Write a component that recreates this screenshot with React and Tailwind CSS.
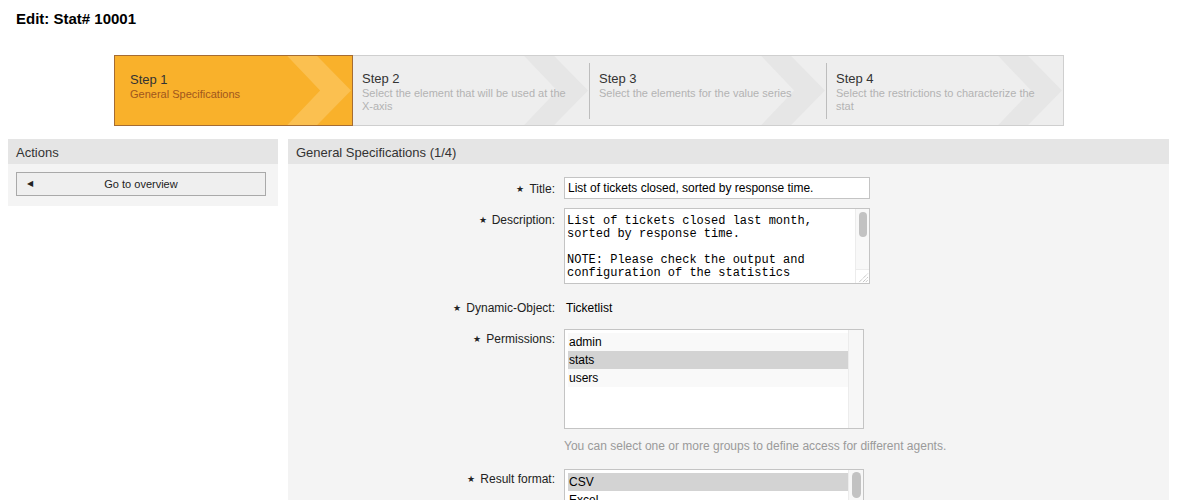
import React from 'react';

const steps = [
  { n: 'Step 1', desc: 'General Specifications' },
  { n: 'Step 2', desc: 'Select the element that will be used at the X-axis' },
  { n: 'Step 3', desc: 'Select the elements for the value series' },
  { n: 'Step 4', desc: 'Select the restrictions to characterize the stat' },
];

const Chevron = ({ fill }) => (
  <svg className="absolute inset-0 h-full w-full" viewBox="0 0 238 71" preserveAspectRatio="none">
    <polygon points="173,0 203,0 237,35.5 203,71 173,71 206,35.5" fill={fill} />
  </svg>
);

const Star = () => <span className="mr-[5px] text-[9px] align-[1px]">★</span>;

const FormLabel = ({ children, className = 'pt-px' }) => (
  <div className={`w-[276px] shrink-0 pr-[9px] text-right ${className}`}>
    <Star />
    {children}
  </div>
);

const Scrollbar = ({ thumb }) => (
  <div className="w-[15px] shrink-0 border-l border-[#ececec] bg-[#f7f7f7] pt-[2px] flex justify-center">
    {thumb && <div className="w-[9px] h-[26px] rounded-full bg-[#c2c2c2]" />}
  </div>
);

const App = () => {
  return (
    <div className="h-[500px] overflow-hidden bg-white font-['Liberation_Sans',Arial,sans-serif] text-[12px] text-[#222]">
      <h1 className="pl-4 pt-[10px] text-[15px] font-bold leading-[18px] text-black">Edit: Stat# 10001</h1>

      <div className="ml-[114px] mt-[27px] grid w-[950px] grid-cols-4 border border-[#cfcfcf] bg-[#eeeeee]">
        {steps.map((s, i) => (
          <div
            key={s.n}
            className={
              i === 0
                ? 'relative -m-px h-[71px] border border-[#a56c33] bg-[#f9b12b]'
                : 'relative h-[69px]'
            }
          >
            <Chevron fill={i === 0 ? '#fbc050' : '#e6e6e6'} />
            {i > 1 && <div className="absolute left-0 top-[7px] h-[56px] w-px bg-[#bdbdbd]" />}
            <div className={`relative ${i === 0 ? 'pl-[15px] pt-[16px]' : 'pl-[10px] pt-[15px]'} pr-[20px]`}>
              <div className="text-[13px] leading-[16px] text-[#333]">{s.n}</div>
              <div className={`text-[11px] leading-[13px] ${i === 0 ? 'text-[#a0561d]' : 'text-[#b3b3b3]'}`}>{s.desc}</div>
            </div>
          </div>
        ))}
      </div>

      <div className="mt-[13px] flex gap-[10px] pl-2 pr-[15px]">
        <div className="w-[270px] shrink-0 self-start">
          <div className="h-[25px] bg-[#e5e5e5] pl-2 text-[13px] leading-[27px] text-[#333]">Actions</div>
          <div className="bg-[#f4f4f4] pb-[10px] pl-2 pr-3 pt-2">
            <button className="relative flex h-[24px] w-full items-center justify-center border border-[#a9a9a9] bg-[#efefef] text-[11px] text-[#222]">
              <span className="absolute left-[10px] text-[8px]">◀</span>
              Go to overview
            </button>
          </div>
        </div>

        <div className="flex-1">
          <div className="h-[25px] bg-[#e5e5e5] pl-2 text-[13px] leading-[27px] text-[#333]">General Specifications (1/4)</div>
          <div className="h-[336px] overflow-hidden bg-[#f4f4f4] pt-[13px]">
            <div className="flex">
              <FormLabel className="h-[22px] pt-px leading-[22px]">Title:</FormLabel>
              <div className="h-[22px] w-[306px] border border-[#c4c4c4] bg-white pl-[3px] leading-[21px] text-black">
                List of tickets closed, sorted by response time.
              </div>
            </div>

            <div className="mt-[9px] flex">
              <FormLabel className="pt-px leading-[22px]">Description:</FormLabel>
              <div className="flex h-[76px] w-[306px] border border-[#c4c4c4] bg-white">
                <div className="flex-1 overflow-hidden whitespace-pre pl-[2px] pt-[6px] font-['Liberation_Mono','Courier_New',monospace] text-[12px] leading-[13px] text-black">
                  {'List of tickets closed last month,\nsorted by response time.\n\nNOTE: Please check the output and\nconfiguration of the statistics'}
                </div>
                <div className="relative w-[14px] shrink-0 border-l border-[#ececec] bg-[#f8f8f8]">
                  <div className="mx-auto mt-[3px] h-[25px] w-[8px] rounded-full bg-[#c2c2c2]" />
                  <svg className="absolute bottom-0 right-0 border-t border-[#ececec] bg-white" width="13" height="14" viewBox="0 0 13 14">
                    <path d="M3 13 L12 4 M7 13 L12 8 M10 13 L12 11" stroke="#999" strokeWidth="1" strokeDasharray="1 1" />
                  </svg>
                </div>
              </div>
            </div>

            <div className="mt-[12px] flex leading-[22px]">
              <FormLabel>Dynamic-Object:</FormLabel>
              <div className="pl-[2px] pt-px text-black">Ticketlist</div>
            </div>

            <div className="mt-[10px] flex">
              <FormLabel className="pt-px leading-[18px]">Permissions:</FormLabel>
              <div className="flex h-[100px] w-[300px] border border-[#c4c4c4] bg-white">
                <div className="flex-1 py-[3px] pl-[3px] leading-[18px] text-black">
                  <div className="bg-[#f9f9f9] pl-[1px]">admin</div>
                  <div className="bg-[#d3d3d3] pl-[1px]">stats</div>
                  <div className="bg-[#f9f9f9] pl-[1px]">users</div>
                </div>
                <Scrollbar />
              </div>
            </div>

            <div className="mt-[8px] pl-[276px] leading-[18px] text-[#9a9a9a]">
              You can select one or more groups to define access for different agents.
            </div>

            <div className="mt-[14px] flex">
              <FormLabel className="pt-px leading-[18px]">Result format:</FormLabel>
              <div className="flex h-[60px] w-[300px] border border-[#c4c4c4] bg-white">
                <div className="flex-1 py-[3px] pl-[3px] leading-[18px] text-black">
                  <div className="bg-[#d3d3d3] pl-[1px]">CSV</div>
                  <div className="pl-[1px]">Excel</div>
                  <div className="pl-[1px]">Print</div>
                </div>
                <Scrollbar thumb />
              </div>
            </div>
          </div>
        </div>
      </div>
    </div>
  );
};

export default App;
